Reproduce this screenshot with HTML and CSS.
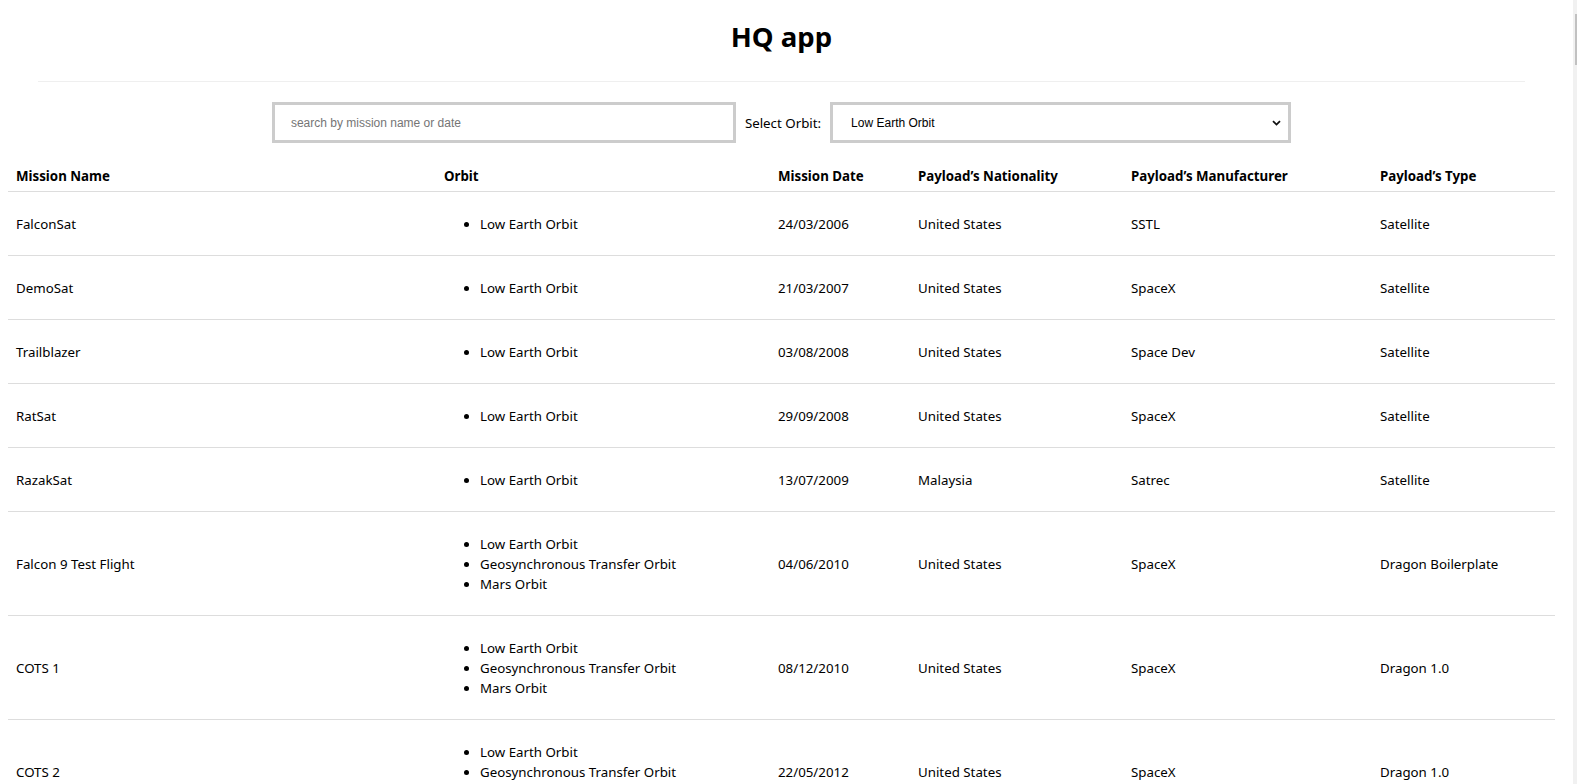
FILE: index.html
```html
<!DOCTYPE html>
<html lang="en">
<head>
<meta charset="utf-8">
<title>HQ app</title>
<link rel="stylesheet" href="styles.css">
</head>
<body>
<div class="page">
  <header class="app-header">
    <h1 class="app-title">HQ app</h1>
    <hr class="divider">
  </header>

  <div class="toolbar">
    <input class="search" type="text" placeholder="search by mission name or date">
    <label class="orbit-label" for="orbit">Select Orbit:</label>
    <div class="select-wrap">
      <select id="orbit" class="orbit-select">
        <option>Low Earth Orbit</option>
        <option>Geosynchronous Transfer Orbit</option>
        <option>Mars Orbit</option>
      </select>
      <svg class="chevron" width="9" height="6" viewBox="0 0 9 6" aria-hidden="true"><path d="M1 1.2 L4.5 4.6 L8 1.2" fill="none" stroke="#111" stroke-width="1.8"/></svg>
    </div>
  </div>

  <table class="missions">
    <colgroup>
      <col class="c-name"><col class="c-orbit"><col class="c-date"><col class="c-nat"><col class="c-man"><col class="c-type">
    </colgroup>
    <thead>
      <tr><th>Mission Name</th><th>Orbit</th><th>Mission Date</th><th>Payload’s Nationality</th><th>Payload’s Manufacturer</th><th>Payload’s Type</th></tr>
    </thead>
    <tbody>
      <tr><td>FalconSat</td><td><ul class="orbits"><li>Low Earth Orbit</li></ul></td><td>24/03/2006</td><td>United States</td><td>SSTL</td><td>Satellite</td></tr>
      <tr><td>DemoSat</td><td><ul class="orbits"><li>Low Earth Orbit</li></ul></td><td>21/03/2007</td><td>United States</td><td>SpaceX</td><td>Satellite</td></tr>
      <tr><td>Trailblazer</td><td><ul class="orbits"><li>Low Earth Orbit</li></ul></td><td>03/08/2008</td><td>United States</td><td>Space Dev</td><td>Satellite</td></tr>
      <tr><td>RatSat</td><td><ul class="orbits"><li>Low Earth Orbit</li></ul></td><td>29/09/2008</td><td>United States</td><td>SpaceX</td><td>Satellite</td></tr>
      <tr><td>RazakSat</td><td><ul class="orbits"><li>Low Earth Orbit</li></ul></td><td>13/07/2009</td><td>Malaysia</td><td>Satrec</td><td>Satellite</td></tr>
      <tr><td>Falcon 9 Test Flight</td><td><ul class="orbits"><li>Low Earth Orbit</li><li>Geosynchronous Transfer Orbit</li><li>Mars Orbit</li></ul></td><td>04/06/2010</td><td>United States</td><td>SpaceX</td><td>Dragon Boilerplate</td></tr>
      <tr><td>COTS 1</td><td><ul class="orbits"><li>Low Earth Orbit</li><li>Geosynchronous Transfer Orbit</li><li>Mars Orbit</li></ul></td><td>08/12/2010</td><td>United States</td><td>SpaceX</td><td>Dragon 1.0</td></tr>
      <tr><td>COTS 2</td><td><ul class="orbits"><li>Low Earth Orbit</li><li>Geosynchronous Transfer Orbit</li><li>Mars Orbit</li></ul></td><td>22/05/2012</td><td>United States</td><td>SpaceX</td><td>Dragon 1.0</td></tr>
      <tr><td>CRS-1</td><td><ul class="orbits"><li>Low Earth Orbit</li><li>Geosynchronous Transfer Orbit</li><li>Mars Orbit</li></ul></td><td>08/10/2012</td><td>United States</td><td>SpaceX</td><td>Dragon 1.0</td></tr>
      <tr><td>CRS-2</td><td><ul class="orbits"><li>Low Earth Orbit</li><li>Geosynchronous Transfer Orbit</li><li>Mars Orbit</li></ul></td><td>01/03/2013</td><td>United States</td><td>SpaceX</td><td>Dragon 1.0</td></tr>
    </tbody>
  </table>
</div>
<div class="scrollbar" aria-hidden="true"><div class="scroll-thumb"></div></div>
</body>
</html>
```
FILE: styles.css
```css
html, body {
  margin: 0;
  background: #fff;
  color: #000;
}

body {
  font-family: "Noto Sans", "Open Sans", sans-serif;
  font-size: 13.3px;
  line-height: 20px;
  padding-right: 14px;
}

.page {
  padding: 0 8px 8px;
}

.app-header {
  padding-top: 16px;
}

.app-title {
  margin: 0;
  font-size: 27.6px;
  line-height: 40px;
  font-weight: 700;
  text-align: center;
}

.divider {
  margin: 25px 30px 0;
  border: 0;
  border-top: 1px solid #efefef;
  height: 0;
}

.toolbar {
  display: flex;
  justify-content: center;
  align-items: center;
  gap: 9px;
  margin-top: 20px;
}

.search,
.orbit-select {
  box-sizing: border-box;
  height: 41px;
  border: 3px solid #cccccc;
  border-radius: 0;
  background: #fff;
  font-family: "Liberation Sans", Arial, sans-serif;
  font-size: 12px;
  color: #000;
  outline: none;
}

.search {
  width: 464px;
  padding: 0 16px;
}

.search::placeholder {
  color: #757575;
}

.orbit-label {
  white-space: nowrap;
}

.select-wrap {
  position: relative;
  width: 461px;
}

.orbit-select {
  width: 100%;
  padding: 0 30px 0 18px;
  appearance: none;
  -webkit-appearance: none;
}

.chevron {
  position: absolute;
  right: 10px;
  top: 18px;
  pointer-events: none;
}

.missions {
  width: 100%;
  margin-top: 12px;
  border-collapse: collapse;
  table-layout: fixed;
}

.c-name { width: 428px; }
.c-orbit { width: 334px; }
.c-date { width: 140px; }
.c-nat { width: 213px; }
.c-man { width: 249px; }

.missions th,
.missions td {
  padding: 8px;
  text-align: left;
  vertical-align: middle;
}

.missions th {
  font-weight: 700;
  vertical-align: bottom;
  padding-top: 11px;
  padding-bottom: 5px;
  border-bottom: 1px solid #dddddd;
}

.missions td {
  border-top: 1px solid #dddddd;
}

.orbits {
  margin: 13.5px 0;
  padding-left: 36px;
}

.scrollbar {
  position: fixed;
  top: 0;
  right: 0;
  bottom: 0;
  width: 4px;
  background: #f1f1f1;
}

.scroll-thumb {
  margin-top: 14px;
  margin-left: 2px;
  width: 2px;
  height: 51px;
  background: #c1c1c1;
}
```
